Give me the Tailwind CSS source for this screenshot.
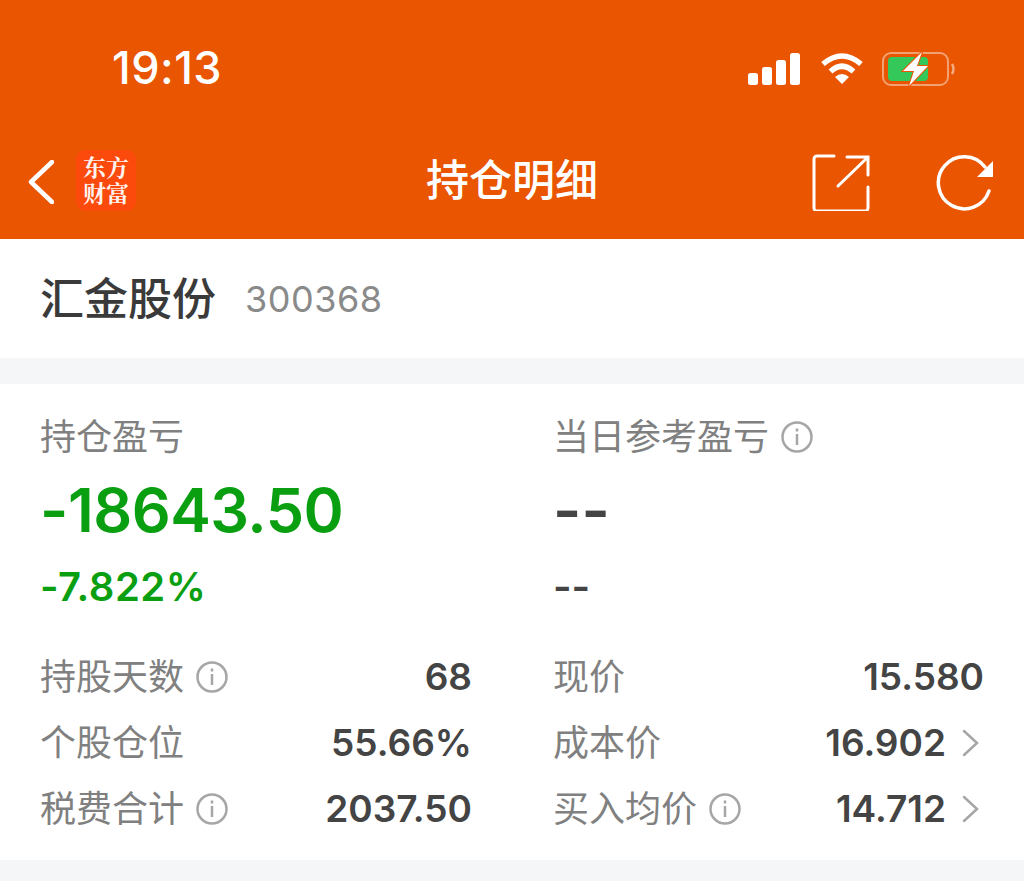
<!DOCTYPE html>
<html lang="zh">
<head>
    <meta charset="UTF-8">
    <title>持仓明细</title>
    <script src="https://cdn.jsdelivr.net/npm/@tailwindcss/browser@4"></script>
</head>
<body class="bg-white font-['Inter','Noto_Sans_CJK_SC',sans-serif] w-[1024px] h-[890px] overflow-hidden">
    <!-- Status + nav -->
    <header class="bg-[#e95500] h-[239px] flex flex-col text-white">
        <div class="h-[136px] flex justify-between items-start pl-[112px] pr-[68px] pt-[43px]">
            <span class="text-[45px] leading-[50px] font-medium tracking-[0.5px]">19:13</span>
            <div class="flex items-center gap-[20px] pt-[8px]">
                <svg width="52" height="32" viewBox="0 0 52 32" fill="#fff">
                    <rect x="0" y="20" width="10" height="12" rx="2.5"/>
                    <rect x="14" y="14" width="10" height="18" rx="2.5"/>
                    <rect x="28" y="7" width="10" height="25" rx="2.5"/>
                    <rect x="42" y="0" width="10" height="32" rx="2.5"/>
                </svg>
                <svg width="44" height="32" viewBox="0 0 44 32" fill="none" stroke="#fff" stroke-width="5.5">
                    <path d="M3 11 Q22 -5 41 11"/>
                    <path d="M10.500 18.500 Q22 8 33.500 18.500"/>
                    <path d="M22 31 L15 24 Q22 18 29 24 Z" fill="#fff" stroke="none"/>
                </svg>
                <svg width="74" height="36" viewBox="0 0 74 36" fill="none" class="-ml-[2px]">
                    <rect x="1" y="2" width="65" height="32" rx="8" stroke="#fff" stroke-opacity=".45" stroke-width="2"/>
                    <rect x="6" y="6" width="40" height="24" rx="4" fill="#34c759"/>
                    <path d="M70 13 q3 5 0 10" stroke="#fff" stroke-opacity=".5" stroke-width="2.500"/>
                    <path d="M40 1 L21 20 H32 L27 35 L46 15 H35 Z" fill="#fff" stroke="#e95500" stroke-width="2" paint-order="stroke"/>
                </svg>
            </div>
        </div>
        <div class="relative flex-1 flex items-center justify-between pl-[28px] pr-[30px] pb-[12px]">
            <div class="flex items-center gap-[22px]">
                <svg width="26" height="44" viewBox="0 0 26 44" fill="none" stroke="#fff" stroke-width="4.500" stroke-linecap="round" stroke-linejoin="round">
                    <path d="M24 2 L3 22 L24 42"/>
                </svg>
                <div class="w-[60px] h-[61px] -mt-[3px] rounded-[9px] bg-[#fb4a0c] flex flex-col items-center justify-center font-['Noto_Serif_CJK_SC','Noto_Sans_CJK_SC',serif] font-bold text-[23px] leading-[26px] text-white/95">
                    <span>东方</span>
                    <span>财富</span>
                </div>
            </div>
            <h1 class="absolute left-0 right-0 text-center text-[43px] leading-[50px] font-medium pb-[4px]">持仓明细</h1>
            <div class="flex items-center gap-[66px]">
                <svg width="58" height="58" viewBox="0 0 58 58" fill="none" stroke="#fff" stroke-width="3" stroke-linecap="round">
                    <path d="M22 3 H5 a3 3 0 0 0 -3 3 V55 a3 3 0 0 0 3 3 H53 a3 3 0 0 0 3 -3 V34"/>
                    <path d="M26 33 L55 5"/>
                    <path d="M35 4 H56 V22"/>
                </svg>
                <svg width="58" height="58" viewBox="0 0 58 58" fill="none" stroke="#fff" stroke-width="3.500" stroke-linecap="round">
                    <path d="M49 14 A26 26 0 1 0 53 38"/>
                    <path d="M57 8 V24 H41 Z" fill="#fff" stroke="none"/>
                </svg>
            </div>
        </div>
    </header>

    <!-- Stock name -->
    <section class="h-[119px] flex items-center gap-[29px] pl-[40px]">
        <span class="text-[44px] leading-none font-medium text-[#3a3a3a]">汇金股份</span>
        <span class="text-[36px] leading-none text-[#8a8a8a] tracking-[0.5px]">300368</span>
    </section>
    <div class="h-[26px] bg-[#f5f6f8]"></div>

    <!-- Profit summary -->
    <section class="h-[476px] pt-[30px] pl-[40px] pr-[40px]">
        <div class="grid grid-cols-[513px_1fr]">
            <div>
                <div class="text-[36px] leading-[46px] text-[#808080]">持仓盈亏</div>
                <div class="text-[61px] leading-[70px] mt-[15px] font-semibold text-[#0a9f10] tracking-[-0.5px]">-18643.50</div>
                <div class="text-[40px] leading-[46px] mt-[19px] font-semibold text-[#0a9f10] tracking-[0.5px]">-7.822%</div>
            </div>
            <div>
                <div class="flex items-center gap-[12px] text-[36px] leading-[46px] text-[#808080]">
                    当日参考盈亏
                    <svg width="32" height="32" viewBox="0 0 32 32" fill="none" stroke="#a6a6a6" stroke-width="2.500">
                        <circle cx="16" cy="16" r="14.500"/><path d="M16 13 V24"/><path d="M16 7.500 V10.500"/>
                    </svg>
                </div>
                <div class="text-[61px] leading-[70px] mt-[15px] font-semibold text-[#444]">--</div>
                <div class="text-[40px] leading-[46px] mt-[19px] font-semibold text-[#444]">--</div>
            </div>
        </div>
        <div class="grid grid-cols-[513px_1fr] mt-[44px] text-[36px] text-[#808080] leading-[46px]">
            <div class="flex flex-col gap-[20px] pr-[81px]">
                <div class="flex items-center justify-between">
                    <span class="flex items-center gap-[12px]">持股天数
                        <svg width="32" height="32" viewBox="0 0 32 32" fill="none" stroke="#a6a6a6" stroke-width="2.500">
                            <circle cx="16" cy="16" r="14.500"/><path d="M16 13 V24"/><path d="M16 7.500 V10.500"/>
                        </svg>
                    </span>
                    <span class="text-[37px] font-semibold text-[#444]">68</span>
                </div>
                <div class="flex items-center justify-between">
                    <span>个股仓位</span>
                    <span class="text-[37px] font-semibold text-[#444]">55.66%</span>
                </div>
                <div class="flex items-center justify-between">
                    <span class="flex items-center gap-[12px]">税费合计
                        <svg width="32" height="32" viewBox="0 0 32 32" fill="none" stroke="#a6a6a6" stroke-width="2.500">
                            <circle cx="16" cy="16" r="14.500"/><path d="M16 13 V24"/><path d="M16 7.500 V10.500"/>
                        </svg>
                    </span>
                    <span class="text-[37px] font-semibold text-[#444]">2037.50</span>
                </div>
            </div>
            <div class="flex flex-col gap-[20px]">
                <div class="flex items-center justify-between">
                    <span>现价</span>
                    <span class="text-[37px] font-semibold text-[#444]">15.580</span>
                </div>
                <div class="flex items-center justify-between">
                    <span>成本价</span>
                    <span class="flex items-center gap-[16px] pr-[5px] text-[37px] font-semibold text-[#444]">16.902
                        <svg width="17" height="28" viewBox="0 0 17 28" fill="none" stroke="#a6a6a6" stroke-width="2.500" stroke-linecap="round"><path d="M2 2 L15 14 L2 26"/></svg>
                    </span>
                </div>
                <div class="flex items-center justify-between">
                    <span class="flex items-center gap-[12px]">买入均价
                        <svg width="32" height="32" viewBox="0 0 32 32" fill="none" stroke="#a6a6a6" stroke-width="2.500">
                            <circle cx="16" cy="16" r="14.500"/><path d="M16 13 V24"/><path d="M16 7.500 V10.500"/>
                        </svg>
                    </span>
                    <span class="flex items-center gap-[16px] pr-[5px] text-[37px] font-semibold text-[#444]">14.712
                        <svg width="17" height="28" viewBox="0 0 17 28" fill="none" stroke="#a6a6a6" stroke-width="2.500" stroke-linecap="round"><path d="M2 2 L15 14 L2 26"/></svg>
                    </span>
                </div>
            </div>
        </div>
    </section>
    <div class="h-[21px] bg-[#f5f6f8]"></div>
</body>
</html>
